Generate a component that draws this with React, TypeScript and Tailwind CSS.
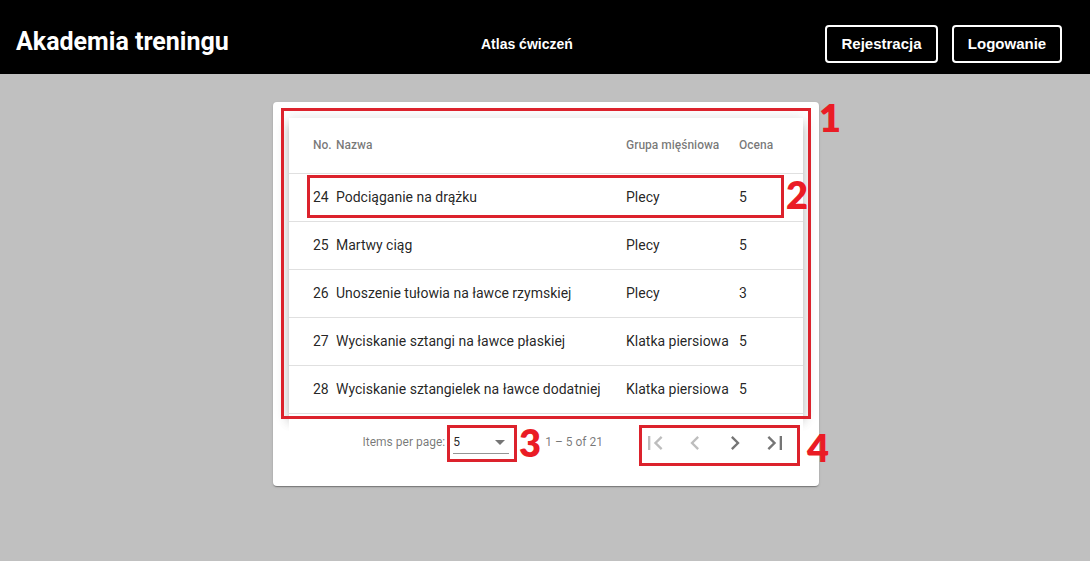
import React, { useState } from "react";

const exercises = [
  { no: 24, name: "Podciąganie na drążku", group: "Plecy", rating: 5 },
  { no: 25, name: "Martwy ciąg", group: "Plecy", rating: 5 },
  { no: 26, name: "Unoszenie tułowia na ławce rzymskiej", group: "Plecy", rating: 3 },
  { no: 27, name: "Wyciskanie sztangi na ławce płaskiej", group: "Klatka piersiowa", rating: 5 },
  { no: 28, name: "Wyciskanie sztangielek na ławce dodatniej", group: "Klatka piersiowa", rating: 5 },
];

const pagerButtons = [
  {
    label: "First page",
    disabled: true,
    path: "M18.41 16.59L13.82 12l4.59-4.59L17 6l-6 6 6 6zM6 6h2v12H6z",
  },
  {
    label: "Previous page",
    disabled: true,
    path: "M15.41 7.41L14 6l-6 6 6 6 1.41-1.41L10.83 12z",
  },
  {
    label: "Next page",
    disabled: false,
    path: "M10 6L8.59 7.41 13.17 12l-4.58 4.59L10 18l6-6z",
  },
  {
    label: "Last page",
    disabled: false,
    path: "M5.59 7.41L10.18 12l-4.59 4.59L7 18l6-6-6-6zM16 6h2v12h-2z",
  },
];

function Header() {
  return (
    <header className="flex h-[74px] items-center justify-between bg-black pt-[14px] pr-7 pl-4 text-white">
      <h1 className="pb-1 font-[Roboto,sans-serif] text-[25px] leading-8 font-bold">Akademia treningu</h1>
      <a href="#atlas" className="text-sm font-bold">
        Atlas ćwiczeń
      </a>
      <div className="flex gap-[14px] text-[15px] font-bold">
        <button type="button" className="h-[38px] w-[113px] rounded border-2 border-white">
          Rejestracja
        </button>
        <button type="button" className="h-[38px] w-[110px] rounded border-2 border-white">
          Logowanie
        </button>
      </div>
    </header>
  );
}

function Frame({ className }: { className: string }) {
  return <div className={`pointer-events-none absolute border-3 border-[#dc222c] ${className}`} />;
}

function Marker({ className, children }: { className: string; children: React.ReactNode }) {
  return (
    <span
      className={`pointer-events-none absolute font-[Lato,sans-serif] text-[38px] leading-10 font-extrabold text-[#ea1c25] ${className}`}
    >
      {children}
    </span>
  );
}

function ExerciseTable() {
  return (
    <table className="w-full table-fixed border-separate border-spacing-0 bg-white text-left shadow-[0_5px_5px_-3px_rgba(0,0,0,0.2),0_8px_10px_1px_rgba(0,0,0,0.14),0_3px_14px_2px_rgba(0,0,0,0.12)] [&_td]:border-b [&_td]:border-black/12 [&_td]:pb-0.5 [&_th]:border-b [&_th]:border-black/12 [&_th]:pb-0.5">
      <colgroup>
        <col className="w-[47px]" />
        <col />
        <col className="w-[113px]" />
        <col className="w-16" />
      </colgroup>
      <thead>
        <tr className="h-14 text-xs text-black/54">
          <th className="pl-6 font-medium">No.</th>
          <th className="font-medium">Nazwa</th>
          <th className="font-medium">Grupa mięśniowa</th>
          <th className="pr-6 font-medium">Ocena</th>
        </tr>
      </thead>
      <tbody className="text-sm whitespace-nowrap text-black/87">
        {exercises.map((e) => (
          <tr key={e.no} className="h-12">
            <td className="pl-6">{e.no}</td>
            <td>{e.name}</td>
            <td>{e.group}</td>
            <td className="pr-6">{e.rating}</td>
          </tr>
        ))}
      </tbody>
    </table>
  );
}

function Paginator() {
  const [size, setSize] = useState("5");
  return (
    <div className="relative flex h-14 items-center justify-end bg-white pr-2 text-xs text-black/54">
      <label htmlFor="page-size">Items per page:</label>
      <div className="relative mr-9 ml-2 w-14">
        <select
          id="page-size"
          value={size}
          onChange={(e) => setSize(e.target.value)}
          className="h-6 w-full appearance-none border-b border-black/42 bg-transparent text-black/87"
        >
          <option>5</option>
          <option>10</option>
          <option>20</option>
        </select>
        <svg
          viewBox="0 0 10 5"
          className="pointer-events-none absolute top-2.5 right-1 h-[5px] w-[10px]"
          fill="#757575"
          aria-hidden="true"
        >
          <path d="M0 0h10L5 5z" />
        </svg>
      </div>
      <span className="mr-8">1 – 5 of 21</span>
      {pagerButtons.map((b) => (
        <button
          key={b.label}
          type="button"
          aria-label={b.label}
          disabled={b.disabled}
          className="flex size-10 items-center justify-center pt-0.5 text-black/54 disabled:text-black/26"
        >
          <svg viewBox="0 0 24 24" className="size-7" fill="currentColor" aria-hidden="true">
            <path d={b.path} />
          </svg>
        </button>
      ))}
    </div>
  );
}

export default function App() {
  return (
    <div className="min-h-screen bg-[#c0c0c0] font-['Liberation_Sans',Arial,sans-serif]">
      <Header />
      <main className="flex justify-center pt-7 pb-8 pl-0.5">
        <section className="relative w-1/2 min-w-[546px] rounded bg-white p-4 font-[Roboto,sans-serif] shadow-[0_2px_1px_-1px_rgba(0,0,0,0.2),0_1px_1px_0_rgba(0,0,0,0.14),0_1px_3px_0_rgba(0,0,0,0.12)]">
          <ExerciseTable />
          <Paginator />

          <Frame className="top-1.5 right-2 left-2 h-[311px]" />
          <Marker className="top-[-5px] left-full">1</Marker>
          <Frame className="top-[73px] right-[35px] left-[34px] h-[43px]" />
          <Marker className="top-[72px] right-[11px]">2</Marker>
          <Frame className="right-[302px] bottom-6 h-[37px] w-[70px]" />
          <Marker className="right-[278px] bottom-6">3</Marker>
          <Frame className="right-[19px] bottom-5 h-[41px] w-[161px]" />
          <Marker className="right-[-10px] bottom-[19px]">4</Marker>
        </section>
      </main>
    </div>
  );
}
